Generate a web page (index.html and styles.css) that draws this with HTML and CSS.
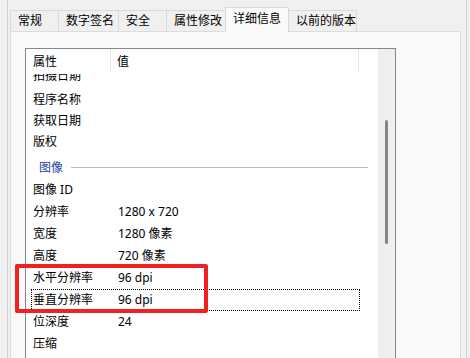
FILE: index.html
```html
<!DOCTYPE html>
<html lang="zh-CN">
<head>
  <meta charset="UTF-8">
  <title>属性 - 详细信息</title>
  <link rel="stylesheet" href="styles.css">
</head>
<body>
  <div class="window">
    <div class="tabs">
      <div class="tab">常规</div>
      <div class="tab">数字签名</div>
      <div class="tab">安全</div>
      <div class="tab">属性修改</div>
      <div class="tab active">详细信息</div>
      <div class="tab">以前的版本</div>
    </div>

    <div class="panel">
      <div class="listbox">
        <div class="list">
          <div class="header">
            <div class="col-name">属性</div>
            <div class="col-value">值</div>
            <div class="col-rest"></div>
          </div>
          <div class="rows">
            <div class="inner">
              <div class="row short clipped"><span>拍摄日期</span><span></span></div>
              <div class="row short"><span>程序名称</span><span></span></div>
              <div class="row short"><span>获取日期</span><span></span></div>
              <div class="row short"><span>版权</span><span></span></div>
              <div class="group"><span>图像</span><i></i></div>
              <div class="row"><span>图像 ID</span><span></span></div>
              <div class="row"><span>分辨率</span><span>1280 x 720</span></div>
              <div class="row"><span>宽度</span><span>1280 像素</span></div>
              <div class="row"><span>高度</span><span>720 像素</span></div>
              <div class="row"><span>水平分辨率</span><span>96 dpi</span></div>
              <div class="row focus"><span>垂直分辨率</span><span>96 dpi</span></div>
              <div class="row"><span>位深度</span><span>24</span></div>
              <div class="row"><span>压缩</span><span></span></div>
            </div>
          </div>
        </div>
        <div class="scrollbar"><div class="thumb"></div></div>
      </div>
    </div>
  </div>

  <div class="mark"></div>
</body>
</html>
```

FILE: styles.css
```css
html, body {
  margin: 0;
  height: 358px;
  overflow: hidden;
}

body {
  background: #f0f0f0;
  color: #000;
  font-family: "Noto Sans", "Noto Sans CJK SC", sans-serif;
  font-size: 12px;
}

.window {
  margin-left: 7px;
  width: 460px;
  height: 358px;
  padding: 7px 0 0 1px;
  box-sizing: border-box;
  border-left: 1px solid #d0d0d0;
  border-right: 1px solid #d0d0d0;
}

.tabs {
  display: flex;
  align-items: flex-end;
  height: 24px;
  padding-left: 1px;
}

.tab {
  height: 21px;
  line-height: 20px;
  padding: 0 7px;
  box-sizing: border-box;
  border: 1px solid #d9d9d9;
  border-bottom: none;
  margin-left: -1px;
  background: #f0f0f0;
  white-space: nowrap;
}

.tab:first-child {
  margin-left: 0;
}

.tab:nth-child(1) { width: 49px; }
.tab:nth-child(2) { width: 61px; }
.tab:nth-child(3) { width: 49px; }
.tab:nth-child(4) { width: 60px; }
.tab:nth-child(6) { width: 69px; }

.tab.active {
  width: 64px;
  height: 25px;
  line-height: 22px;
  background: #f9f9f9;
  position: relative;
  z-index: 1;
  margin-bottom: -1px;
}

.panel {
  margin-left: 1px;
  width: 451px;
  height: 340px;
  box-sizing: border-box;
  border: 1px solid #dcdcdc;
  background: #f9f9f9;
  padding: 16px 0 0 14px;
}

.listbox {
  display: flex;
  width: 371px;
  height: 320px;
  box-sizing: border-box;
  border: 1px solid #828790;
  background: #fff;
}

.list {
  width: 352px;
  display: flex;
  flex-direction: column;
}

.header {
  display: flex;
  height: 25px;
  line-height: 25px;
  flex-shrink: 0;
}

.col-name {
  width: 85px;
  padding-left: 7px;
  box-sizing: border-box;
  border-right: 1px solid #e5e5e5;
  height: 24px;
}

.col-value {
  width: 248px;
  padding-left: 6px;
  box-sizing: border-box;
  border-right: 1px solid #e5e5e5;
  height: 24px;
}

.rows {
  flex: 1;
  overflow: hidden;
}

.inner {
  margin-top: -6px;
}

.row {
  display: grid;
  grid-template-columns: 80px 1fr;
  margin-left: 5px;
  width: 329px;
  height: 22px;
  line-height: 22px;
  box-sizing: border-box;
}

.row.short {
  height: 21px;
  line-height: 21px;
}

/* scrolled half under the header */
.row.clipped {
  line-height: 15px;
}

.row span:first-child {
  padding-left: 2px;
}

.row span:last-child {
  padding-left: 7px;
}

.row.focus {
  border: 1px dotted #000;
  line-height: 20px;
  grid-template-columns: 79px 1fr;
}

.row.focus span:first-child {
  padding-left: 1px;
}

.group {
  display: flex;
  align-items: center;
  height: 27px;
  padding: 3px 0 0 13px;
  box-sizing: border-box;
  color: #1f3f9e;
}

.group i {
  flex: 1;
  height: 1px;
  margin: 1px 10px 0 8px;
  background: #b3bfd9;
}

.scrollbar {
  width: 17px;
  background: #efefef;
  padding-left: 7px;
  box-sizing: border-box;
}

.thumb {
  width: 3px;
  height: 124px;
  margin-top: 71px;
  border-radius: 2px;
  background: #858585;
}

.mark {
  position: absolute;
  left: 15px;
  top: 264px;
  width: 193px;
  height: 49px;
  box-sizing: border-box;
  border: 4px solid #f22020;
  border-radius: 2px;
}
```
